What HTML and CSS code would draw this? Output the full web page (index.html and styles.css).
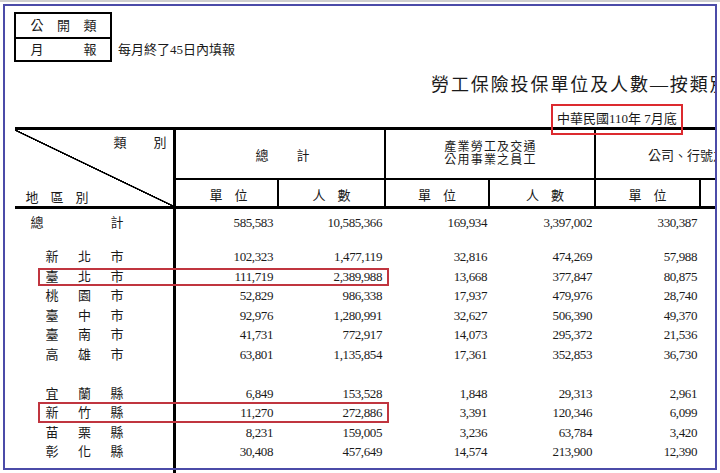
FILE: index.html
```html
<!DOCTYPE html>
<html lang="zh-Hant">
<head>
<meta charset="utf-8">
<title>勞工保險投保單位及人數</title>
<link rel="stylesheet" href="styles.css">
</head>
<body>
<div class="topbar"></div>
<div class="doc">
  <div class="head">
    <div class="classbox">
      <div class="cb-row r1"><span>公</span><span>開</span><span>類</span></div>
      <div class="cb-row r2"><span>月</span><span>報</span></div>
    </div>
    <div class="note">每月終了45日內填報</div>
  </div>
  <h1 class="title">勞工保險投保單位及人數—按類別及地區別分</h1>
  <div class="dateline"><span class="date">中華民國110年 7月底<span class="mark mark-date"></span></span></div>
  <div class="table">
    <div class="thead">
      <div class="th diag">
        <div class="diag-top"><span>類</span><span>別</span></div>
        <div class="diag-bot"><span>地</span><span>區</span><span>別</span></div>
      </div>
      <div class="th grp g1"><span class="pair wide"><span>總</span><span>計</span></span></div>
      <div class="th grp g2"><span class="two">產業勞工及交通<br>公用事業之員工</span></div>
      <div class="th grp g3">公司、行號之員工</div>
      <div class="th sub s1"><span>單</span><span>位</span></div>
      <div class="th sub s2"><span>人</span><span>數</span></div>
      <div class="th sub s3"><span>單</span><span>位</span></div>
      <div class="th sub s4"><span>人</span><span>數</span></div>
      <div class="th sub s5"><span>單</span><span>位</span></div>
      <div class="th sub s6"><span>人</span><span>數</span></div>
    </div>
    <div class="tbody">
      <div class="row">
        <div class="lab total"><span>總</span><span>計</span></div>
        <div class="num c1">585,583</div><div class="num c2">10,585,366</div><div class="num c3">169,934</div><div class="num c4">3,397,002</div><div class="num c5">330,387</div>
      </div>
      <div class="row gap"></div>
      <div class="row">
        <div class="lab"><span>新</span><span>北</span><span>市</span></div>
        <div class="num c1">102,323</div><div class="num c2">1,477,119</div><div class="num c3">32,816</div><div class="num c4">474,269</div><div class="num c5">57,988</div>
      </div>
      <div class="row">
        <div class="lab"><span>臺</span><span>北</span><span>市</span></div>
        <div class="num c1">111,719</div><div class="num c2">2,389,988</div><div class="num c3">13,668</div><div class="num c4">377,847</div><div class="num c5">80,875</div>
        <span class="mark mark-row m1"></span>
      </div>
      <div class="row">
        <div class="lab"><span>桃</span><span>園</span><span>市</span></div>
        <div class="num c1">52,829</div><div class="num c2">986,338</div><div class="num c3">17,937</div><div class="num c4">479,976</div><div class="num c5">28,740</div>
      </div>
      <div class="row">
        <div class="lab"><span>臺</span><span>中</span><span>市</span></div>
        <div class="num c1">92,976</div><div class="num c2">1,280,991</div><div class="num c3">32,627</div><div class="num c4">506,390</div><div class="num c5">49,370</div>
      </div>
      <div class="row">
        <div class="lab"><span>臺</span><span>南</span><span>市</span></div>
        <div class="num c1">41,731</div><div class="num c2">772,917</div><div class="num c3">14,073</div><div class="num c4">295,372</div><div class="num c5">21,536</div>
      </div>
      <div class="row">
        <div class="lab"><span>高</span><span>雄</span><span>市</span></div>
        <div class="num c1">63,801</div><div class="num c2">1,135,854</div><div class="num c3">17,361</div><div class="num c4">352,853</div><div class="num c5">36,730</div>
      </div>
      <div class="row"></div>
      <div class="row">
        <div class="lab"><span>宜</span><span>蘭</span><span>縣</span></div>
        <div class="num c1">6,849</div><div class="num c2">153,528</div><div class="num c3">1,848</div><div class="num c4">29,313</div><div class="num c5">2,961</div>
      </div>
      <div class="row">
        <div class="lab"><span>新</span><span>竹</span><span>縣</span></div>
        <div class="num c1">11,270</div><div class="num c2">272,886</div><div class="num c3">3,391</div><div class="num c4">120,346</div><div class="num c5">6,099</div>
        <span class="mark mark-row m2"></span>
      </div>
      <div class="row">
        <div class="lab"><span>苗</span><span>栗</span><span>縣</span></div>
        <div class="num c1">8,231</div><div class="num c2">159,005</div><div class="num c3">3,236</div><div class="num c4">63,784</div><div class="num c5">3,420</div>
      </div>
      <div class="row">
        <div class="lab"><span>彰</span><span>化</span><span>縣</span></div>
        <div class="num c1">30,408</div><div class="num c2">457,649</div><div class="num c3">14,574</div><div class="num c4">213,900</div><div class="num c5">12,390</div>
      </div>
      <div class="row"></div>
    </div>
  </div>
</div>
<div class="frame"></div>
</body>
</html>
```

FILE: styles.css
```css
html, body {
  margin: 0;
  padding: 0;
  overflow: hidden;
  background: #fff;
}
body {
  position: relative;
  width: 720px;
  height: 473px;
  font-family: "Liberation Serif", "Noto Sans CJK TC", serif;
  color: #1a1a1a;
}
.topbar {
  height: 2px;
  background: #cfcfcf;
}
.doc {
  width: 715px;
  height: 471px;
  overflow: hidden;
  padding: 10px 0 0 14px;
  box-sizing: border-box;
}

/* header block */
.head {
  display: flex;
  align-items: flex-end;
}
.classbox {
  width: 98px;
  border: 2px solid #000;
  box-sizing: border-box;
  font-size: 13px;
}
.cb-row {
  display: flex;
  justify-content: space-between;
  padding: 0 13.5px 0 14.5px;
}
.cb-row + .cb-row {
  border-top: 2px solid #000;
}
.r1 { height: 23px; line-height: 23px; }
.r2 { height: 21px; line-height: 21px; }
.note {
  font-size: 13px;
  line-height: 21px;
  margin: 0 0 2px 6px;
  white-space: nowrap;
}
.title {
  margin: 11px 0 0 417px;
  font-size: 18px;
  line-height: 24px;
  font-weight: 400;
  letter-spacing: 1.9px;
  white-space: nowrap;
}
.dateline {
  margin-top: 14px;
  padding-left: 543px;
  font-size: 13px;
  line-height: 16px;
  white-space: nowrap;
}
.date {
  position: relative;
  display: inline-block;
}
.mark {
  position: absolute;
  box-sizing: border-box;
  pointer-events: none;
  z-index: 2;
}
.mark-date {
  left: -6px;
  top: -7px;
  width: 132px;
  height: 31px;
  border: 2px solid #dc2a2f;
}

/* table */
.table {
  margin-left: 1px;
  width: 789px;
  border-top: 3px solid #000;
}
.thead {
  display: grid;
  grid-template-columns: 158px 104px 107px 104px 106px 105px 105px;
  grid-template-rows: 48px 28px;
  border-bottom: 3px solid #000;
  font-size: 13px;
}
.th {
  box-sizing: border-box;
  display: flex;
  align-items: center;
  justify-content: center;
  text-align: center;
}
.diag {
  grid-column: 1;
  grid-row: 1 / span 2;
  flex-direction: column;
  justify-content: space-between;
  align-items: stretch;
  padding: 5px 6.5px 0 10.5px;
  background: linear-gradient(to top right,
    transparent calc(50% - 1px),
    #000 calc(50% - 0.6px),
    #000 calc(50% + 0.6px),
    transparent calc(50% + 1px));
}
.diag-top {
  display: flex;
  align-self: flex-end;
  gap: 27px;
  line-height: 16px;
}
.diag-bot {
  display: flex;
  align-self: flex-start;
  gap: 12px;
  line-height: 16px;
}
.grp { grid-row: 1; border-left: 2px solid #000; }
.g1 { grid-column: 2 / span 2; border-left-width: 3px; }
.g2 { grid-column: 4 / span 2; }
.two {
  display: block;
  font-size: 12px;
  line-height: 13px;
  letter-spacing: 1.2px;
  padding-left: 1px;
}
.g3 { grid-column: 6 / span 2; }
.pair { display: flex; }
.pair.wide { gap: 28px; padding-left: 5px; }
.sub {
  grid-row: 2;
  border-top: 2px solid #000;
  border-left: 2px solid #000;
  padding-top: 3px;
  gap: 12px;
}
.s1 { grid-column: 2; border-left-width: 3px; padding-left: 4px; }
.s2 { grid-column: 3; }
.s3 { grid-column: 4; }
.s4 { grid-column: 5; padding-left: 6px; }
.s5 { grid-column: 6; }
.s6 { grid-column: 7; }

.tbody {
  padding: 4px 0 60px;
  background: linear-gradient(#000, #000) 158px 0 / 3px 100% no-repeat;
  font-size: 13px;
}
.row {
  position: relative;
  display: grid;
  grid-template-columns: 158px 104px 107px 104px 106px 105px 105px;
  height: 19.5px;
  line-height: 19.5px;
}
.row.gap { height: 14.5px; }
.lab {
  display: flex;
  justify-content: space-between;
  width: 78px;
  margin-left: 30.5px;
}
.lab.total {
  width: 93px;
  margin-left: 15.5px;
}
.num {
  text-align: right;
  letter-spacing: -0.4px;
  white-space: nowrap;
}
.c1 { padding-right: 4px; }
.c2 { padding-right: 2px; }
.c3 { padding-right: 1px; }
.c4 { padding-right: 2px; }
.c5 { padding-right: 2px; }
.mark-row {
  left: 23px;
  width: 351px;
  border: 2px solid #c0353f;
}
.m1 { top: 1px; height: 18.5px; }
.m2 { top: -1.5px; height: 21.5px; }

.frame {
  position: absolute;
  left: 3px;
  top: 4px;
  width: 714px;
  height: 466px;
  border: 2px solid #4b4ba8;
  box-sizing: border-box;
  pointer-events: none;
}
```
